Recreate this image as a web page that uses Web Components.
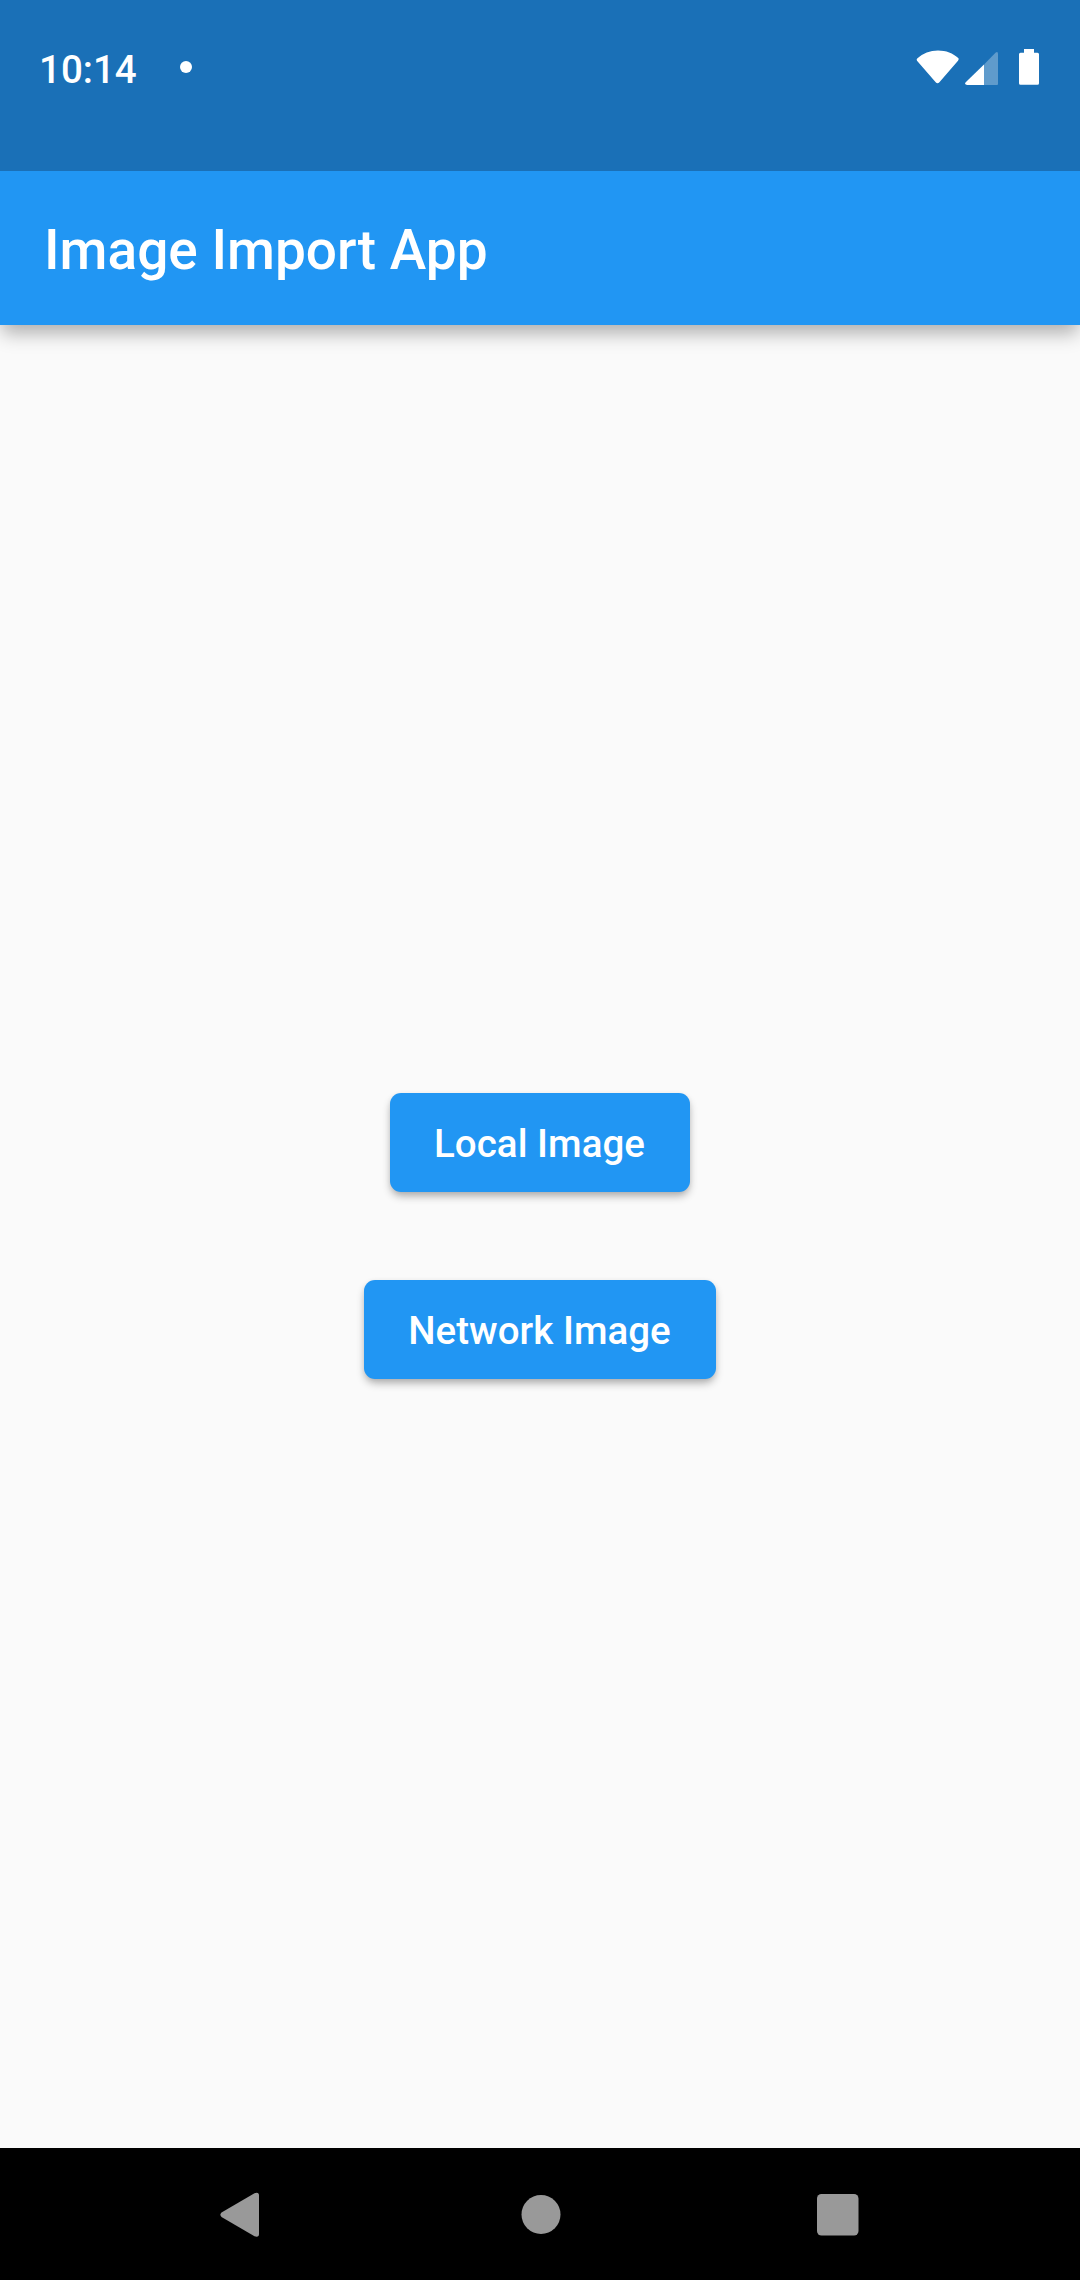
<!DOCTYPE html>
<html lang="en">
<head>
<meta charset="utf-8">
<title>Image Import App</title>
<style>
html, body { margin: 0; height: 100%; }
body { font-family: Roboto, "Noto Sans", sans-serif; background: #fafafa; }
</style>
</head>
<body>
<app-screen>
  <status-bar slot="top">10:14</status-bar>
  <app-bar slot="top">Image Import App</app-bar>
  <raised-button>Local Image</raised-button>
  <raised-button>Network Image</raised-button>
  <nav-bar slot="bottom"></nav-bar>
</app-screen>
<script>
const define = (name, html) => {
  const template = document.createElement('template');
  template.innerHTML = html;
  customElements.define(name, class extends HTMLElement {
    constructor() {
      super();
      this.attachShadow({ mode: 'open' }).append(template.content.cloneNode(true));
    }
  });
};

define('app-screen', `
<style>
:host { display: flex; flex-direction: column; width: 1080px; height: 2280px; overflow: hidden; background: #fafafa; }
main { flex: 1; display: flex; flex-direction: column; align-items: center; justify-content: center; gap: 88px; padding-bottom: 1px; }
</style>
<slot name="top"></slot>
<main><slot></slot></main>
<slot name="bottom"></slot>`);

define('status-bar', `
<style>
:host { position: relative; z-index: 1; display: flex; align-items: flex-start; flex: none; box-sizing: border-box; height: 171px; padding: 46px 41px 0 39px; background: #1a70b7; color: #fff; font-size: 38.5px; line-height: 46px; font-weight: 500; }
span { padding-top: 1px; }
.dot { width: 12px; height: 12px; border-radius: 50%; background: #fff; margin: 15px 0 0 43px; }
.icons { display: flex; margin: 2px 0 0 auto; }
svg { display: block; }
.wifi { margin-right: 6px; }
.signal { margin-right: 20px; }
</style>
<span><slot></slot></span><i class="dot"></i>
<div class="icons">
  <svg class="wifi" width="43" height="38" fill="#fff"><path d="M1.2 10.6C7 5.2 14 2.5 22 2.5S37 5.2 42.5 10.2Q43 11.5 42 12.7L23.4 34.3Q21.5 36.4 19.7 34.3L1 12.7Q.2 11.6 1.2 10.6Z"/></svg>
  <svg class="signal" width="34" height="38" fill="#fff"><path d="M19 16.500V37H2.2Q-1 36.200 .7 34.200Z"/><path opacity=".3" d="M19 16.500L30.500 4.700Q33 3 33 6V36Q33 37 32 37H19Z"/></svg>
  <svg class="battery" width="20" height="38" fill="#fff"><path d="M5 1H15V4.800H18.500Q20 4.800 20 6.300V35.300Q20 36.800 18.500 36.800H1.500Q0 36.800 0 35.300V6.300Q0 4.800 1.500 4.800H5Z"/></svg>
</div>`);

define('app-bar', `
<style>
:host { display: flex; align-items: center; flex: none; box-sizing: border-box; height: 154px; padding: 3px 44px 0; background: #2196f3; color: #fff; font-size: 55px; line-height: 64px; font-weight: 500; box-shadow: 0 10px 18px -2px rgba(0,0,0,.31); }
</style>
<span><slot></slot></span>`);

define('raised-button', `
<style>
:host { display: block; }
button { display: flex; align-items: center; justify-content: center; box-sizing: border-box; height: 99px; padding: 2px 45px 0 44px; border: 0; border-radius: 11px; background: #2196f3; color: #fff; font: 500 38.5px/46px Roboto, sans-serif; letter-spacing: .04px; white-space: nowrap; box-shadow: 0 5px 9px -1px rgba(0,0,0,.31), 0 1px 5px rgba(0,0,0,.05); }
</style>
<button><span><slot></slot></span></button>`);

define('nav-bar', `
<style>
:host { display: flex; align-items: center; justify-content: space-between; flex: none; box-sizing: border-box; height: 132px; padding: 1px 221px 0 220px; background: #000; }
svg { display: block; }
</style>
<svg width="40" height="46" fill="#999"><path d="M1.500 20.500L34.500 1.200Q39 -.3 39 3.500V42Q39 45.700 34.500 44.300L1.500 25Q-.8 22.800 1.500 20.500Z"/></svg>
<svg width="44" height="41" fill="#999"><circle cx="24" cy="20.500" r="19.500"/></svg>
<svg width="42" height="42" fill="#999"><rect width="41.500" height="41.500" rx="4.500"/></svg>`);
</script>
</body>
</html>
